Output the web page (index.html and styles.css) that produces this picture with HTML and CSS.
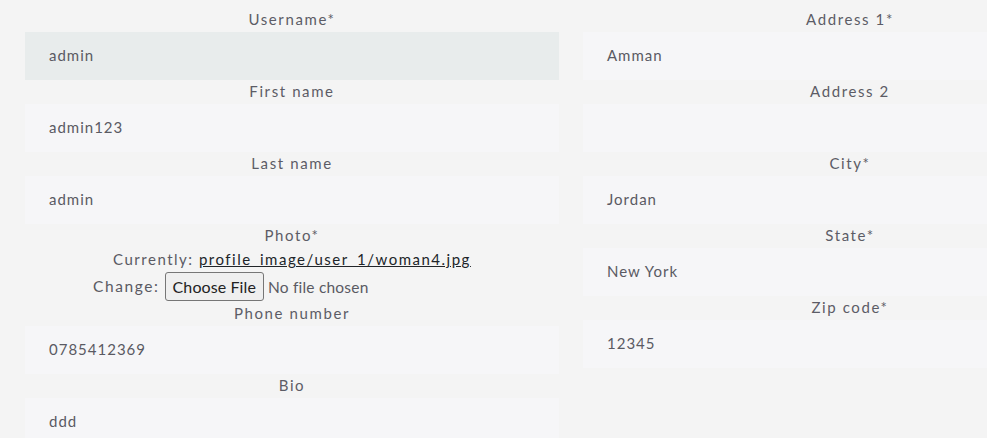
FILE: index.html
```html
<!DOCTYPE html>
<html>
<head>
<meta charset="utf-8">
<link rel="stylesheet" href="styles.css">
</head>
<body>
<form class="profile-form">
  <div class="col">
    <label class="lbl">Username*</label>
    <div class="field disabled">admin</div>
    <label class="lbl">First name</label>
    <div class="field">admin123</div>
    <label class="lbl">Last name</label>
    <div class="field">admin</div>
    <label class="lbl">Photo*</label>
    <div class="photo">
      <div class="line">Currently: <a href="#">profile_image/user_1/woman4.jpg</a></div>
      <div class="line change"><span class="chg">Change:</span><input type="file" class="file"></div>
    </div>
    <label class="lbl">Phone number</label>
    <div class="field">0785412369</div>
    <label class="lbl">Bio</label>
    <div class="field">ddd</div>
  </div>
  <div class="col">
    <label class="lbl">Address 1*</label>
    <div class="field">Amman</div>
    <label class="lbl">Address 2</label>
    <div class="field"></div>
    <label class="lbl">City*</label>
    <div class="field">Jordan</div>
    <label class="lbl">State*</label>
    <div class="field">New York</div>
    <label class="lbl">Zip code*</label>
    <div class="field">12345</div>
  </div>
</form>
</body>
</html>
```
FILE: styles.css
```css
html, body {
  margin: 0;
  padding: 0;
  background: #f4f4f4;
  overflow: hidden;
}
body {
  font-family: Lato, "Noto Sans", sans-serif;
  font-size: 15px;
  color: #5a5a63;
  letter-spacing: 1px;
}
.profile-form {
  display: grid;
  grid-template-columns: 534px 534px;
  column-gap: 24px;
  padding: 8px 0 0 25px;
  width: 1200px;
}
.col {
  display: flex;
  flex-direction: column;
}
.lbl {
  display: block;
  text-align: center;
  height: 24px;
  line-height: 22px;
  padding-bottom: 2px;
  box-sizing: border-box;
  color: #5c5c66;
  letter-spacing: 1.6px;
}
.field {
  height: 48px;
  line-height: 46px;
  padding-left: 24px;
  background: #f6f6f8;
  color: #5a5a63;
}
.field.disabled {
  background: #e8ecec;
}
.photo {
  text-align: center;
  letter-spacing: 1.5px;
}
.photo .line {
  height: 24px;
  line-height: 22px;
}
.photo a {
  color: #212529;
  text-decoration: underline;
}
.photo .line.change {
  height: 30px;
  line-height: 29px;
  display: flex;
  align-items: flex-start;
  padding-left: 68px;
  gap: 5px;
}
.chg {
  letter-spacing: 1.6px;
  font-size: 15.5px;
}
.file {
  font-family: inherit;
  font-size: 15.5px;
  color: #5a5a63;
  letter-spacing: 0.2px;
  width: 300px;
  height: 29px;
}
.file::file-selector-button {
  font-family: inherit;
  font-size: 16px;
  letter-spacing: 0.1px;
  color: #222;
  height: 29px;
  padding: 0 7px;
  margin-right: 4px;
  border: 1px solid #767676;
  border-radius: 3px;
  background: #efefef;
}
```
